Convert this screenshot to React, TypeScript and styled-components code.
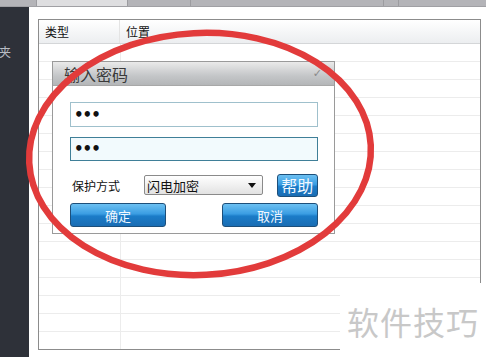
import React from "react";
import styled, { createGlobalStyle } from "styled-components";

const Global = createGlobalStyle`
  html, body { margin: 0; padding: 0; background: #fff; }
  body { width: 486px; height: 357px; overflow: hidden; font-family: "Noto Sans CJK SC", "Noto Sans", sans-serif; }
`;

const Screen = styled.div`
  position: relative;
  width: 486px;
  height: 357px;
  display: flex;
  flex-direction: column;
  overflow: hidden;
  background: #fff;
`;

const TopBar = styled.div`
  height: 7px;
  flex: none;
  display: flex;
  background: #b4b4b8;
  border-bottom: 1px solid #a0a0a4;
  box-sizing: border-box;
`;

const TopTab = styled.div<{ $w: number; $light?: boolean }>`
  width: ${(p) => p.$w}px;
  flex: none;
  background: ${(p) => (p.$light ? "#dedee0" : "#b4b4b8")};
  border-right: 1px solid #9c9ca0;
`;

const Main = styled.div`
  flex: 1;
  display: flex;
  min-height: 0;
`;

const Sidebar = styled.div`
  width: 29px;
  flex: none;
  background: #2e3139;
  color: #b8bcc4;
  font-size: 12px;
  padding-top: 36px;
  box-sizing: border-box;
  overflow: hidden;
  white-space: nowrap;
`;

const SideText = styled.div`
  margin-left: -1px;
`;

const Content = styled.div`
  flex: 1;
  padding: 12px 5px 7px 9px;
  display: flex;
`;

const Table = styled.div`
  flex: 1;
  border: 1px solid #8c8c8c;
  display: flex;
  flex-direction: column;
  overflow: hidden;
`;

const HeaderRow = styled.div`
  height: 23px;
  flex: none;
  display: flex;
  background: linear-gradient(#ffffff, #eceef0);
  border-bottom: 1px solid #d4d6d8;
  font-size: 12px;
  color: #111;
`;

const HeadCell = styled.div<{ $w?: number }>`
  ${(p) => (p.$w ? `width: ${p.$w}px; flex: none;` : "flex: 1;")}
  padding-left: 6px;
  display: flex;
  align-items: center;
  border-right: ${(p) => (p.$w ? "1px solid #e4e4e4" : "none")};
  box-sizing: border-box;
`;

const Row = styled.div`
  height: 18px;
  flex: none;
  display: flex;
  border-bottom: 1px solid #ececec;
  box-sizing: border-box;
`;

const Cell = styled.div<{ $w?: number }>`
  ${(p) => (p.$w ? `width: ${p.$w}px; flex: none;` : "flex: 1;")}
  border-right: ${(p) => (p.$w ? "1px solid #ececec" : "none")};
  box-sizing: border-box;
`;

const Dialog = styled.div`
  position: absolute;
  left: 52px;
  top: 61px;
  width: 283px;
  height: 173px;
  box-sizing: border-box;
  border: 1px solid #9a9a9a;
  background: #fff;
  display: flex;
  flex-direction: column;
`;

const TitleBar = styled.div`
  height: 23px;
  flex: none;
  display: flex;
  align-items: center;
  justify-content: space-between;
  padding: 0 12px 0 11px;
  background: linear-gradient(#eaeaea, #c4c6c8 60%, #b4b6b8);
  border-bottom: 1px solid #a8a8a8;
  font-size: 16px;
  color: #3a3a3a;
`;

const CloseMark = styled.span`
  font-size: 11px;
  color: #8a8a8a;
  font-family: "DejaVu Sans", sans-serif;
`;

const Body = styled.div`
  flex: 1;
  display: flex;
  flex-direction: column;
  padding: 16px 16px 0 17px;
`;

const Field = styled.div<{ $active?: boolean }>`
  height: ${(p) => (p.$active ? 24 : 25)}px;
  box-sizing: border-box;
  border: 1px solid ${(p) => (p.$active ? "#3f7f98" : "#9fc0cc")};
  background: ${(p) => (p.$active ? "#f2fafd" : "#fff")};
  display: flex;
  align-items: center;
  padding-left: 3px;
  font-family: "DejaVu Sans", sans-serif;
  font-size: 15px;
  font-weight: bold;
  letter-spacing: -1px;
  color: #111;
  margin-bottom: 10px;
`;

const OptionRow = styled.div`
  display: flex;
  align-items: center;
  margin-top: 2px;
  height: 24px;
`;

const Label = styled.span`
  width: 72px;
  flex: none;
  padding-left: 2px;
  font-size: 12px;
  color: #111;
`;

const Select = styled.div`
  width: 120px;
  height: 20px;
  box-sizing: border-box;
  border: 1px solid #8a8a8a;
  border-radius: 2px;
  background: linear-gradient(#ffffff, #e2e2e2);
  display: flex;
  align-items: center;
  justify-content: space-between;
  padding: 0 6px 0 2px;
  font-size: 13px;
  color: #111;
`;

const Arrow = styled.span`
  width: 0;
  height: 0;
  border-left: 4px solid transparent;
  border-right: 4px solid transparent;
  border-top: 5px solid #111;
`;

const Spacer = styled.span`
  width: 14px;
  flex: none;
`;

const BlueButton = styled.button<{ $w: number; $h: number; $size: number }>`
  width: ${(p) => p.$w}px;
  height: ${(p) => p.$h}px;
  box-sizing: border-box;
  border: 1px solid #1d4f7a;
  border-radius: 3px;
  background: linear-gradient(#6cc0f2 0%, #3a9de2 45%, #1b7cc8 55%, #1a6db4 100%);
  color: #f2f8ff;
  font-family: "Noto Sans CJK SC", sans-serif;
  font-size: ${(p) => p.$size}px;
  padding: 0;
  display: flex;
  align-items: center;
  justify-content: center;
  line-height: 1;
`;

const ButtonRow = styled.div`
  display: flex;
  justify-content: space-between;
  margin-top: 6px;
`;

const Overlay = styled.svg`
  position: absolute;
  left: 0;
  top: 0;
  pointer-events: none;
`;

const Watermark = styled.div`
  position: absolute;
  right: 0;
  bottom: 0;
  width: 146px;
  height: 74px;
  background: #fff;
  display: flex;
  align-items: center;
  justify-content: center;
  padding-top: 2px;
  box-sizing: border-box;
  font-size: 32px;
  color: #c8c8c8;
  letter-spacing: 1px;
`;

export default function App() {
  const rows = Array.from({ length: 17 });
  return (
    <Screen>
      <Global />
      <TopBar>
        <TopTab $w={36} />
        <TopTab $w={90} $light />
        <TopTab $w={62} />
        <TopTab $w={192} />
        <TopTab $w={14} />
        <TopTab $w={92} />
      </TopBar>
      <Main>
        <Sidebar>
          <SideText>夹</SideText>
        </Sidebar>
        <Content>
          <Table>
            <HeaderRow>
              <HeadCell $w={81}>类型</HeadCell>
              <HeadCell>位置</HeadCell>
            </HeaderRow>
            {rows.map((_, i) => (
              <Row key={i}>
                <Cell $w={82} />
                <Cell />
              </Row>
            ))}
          </Table>
        </Content>
      </Main>

      <Dialog>
        <TitleBar>
          <span>输入密码</span>
          <CloseMark>✓</CloseMark>
        </TitleBar>
        <Body>
          <Field>•••</Field>
          <Field $active>•••</Field>
          <OptionRow>
            <Label>保护方式</Label>
            <Select>
              <span>闪电加密</span>
              <Arrow />
            </Select>
            <Spacer />
            <BlueButton $w={42} $h={23} $size={16}>帮助</BlueButton>
          </OptionRow>
          <ButtonRow>
            <BlueButton $w={96} $h={24} $size={13}>确定</BlueButton>
            <BlueButton $w={96} $h={24} $size={13}>取消</BlueButton>
          </ButtonRow>
        </Body>
      </Dialog>

      <Overlay width={486} height={357}>
        <ellipse
          cx={200}
          cy={154}
          rx={171}
          ry={121}
          fill="none"
          stroke="#e23b3b"
          strokeWidth={6.5}
          transform="rotate(-3 200 154)"
        />
      </Overlay>

      <Watermark>软件技巧</Watermark>
    </Screen>
  );
}
